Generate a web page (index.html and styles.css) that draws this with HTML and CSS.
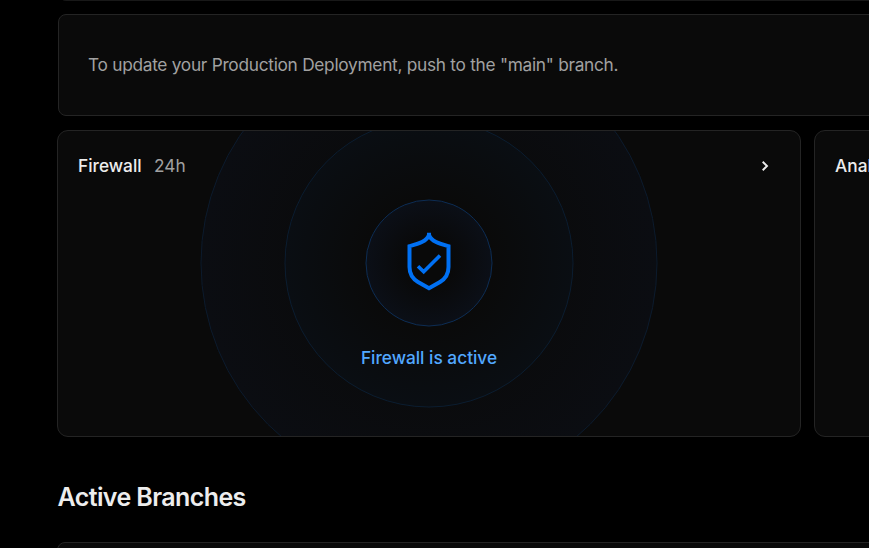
FILE: index.html
```html
<!DOCTYPE html>
<html lang="en">
<head>
<meta charset="utf-8">
<title>Project Overview</title>
<link rel="stylesheet" href="styles.css">
</head>
<body>
<main class="page">
  <section class="panel panel-previous"></section>
  <section class="panel panel-note">
    <p class="note"><span class="note-text">To update your Production Deployment, push to the "main" branch.</span></p>
  </section>
  <div class="cards">
    <article class="card firewall">
      <header class="card-head">
        <h3 class="card-title">Firewall</h3>
        <span class="period">24h</span>
        <svg class="chevron" width="8" height="12" viewBox="0 0 8 12"><path d="M1.7 1.8 6 6 1.7 10.200"/></svg>
      </header>
      <div class="ring ring-large"></div>
      <div class="ring ring-medium"></div>
      <div class="ring ring-small">
        <svg class="shield" width="61" height="61" viewBox="0 0 61 61">
          <path class="shield-body" d="M30.500 0v2.500C28.200 9 20 11.200 11 13.700V34.500C11 41.500 14 46.200 19.500 49.400L30.500 55.800 41.500 49.400C47 46.200 50 41.500 50 34.500V13.700C41 11.200 32.800 9 30.500 2.500"/>
          <path class="shield-check" d="M19.500 33.700 25.200 39.200 41.500 23"/>
        </svg>
      </div>
      <p class="status"><span class="status-text">Firewall is active</span></p>
    </article>
    <article class="card">
      <header class="card-head"><h3 class="card-title">Analytics</h3></header>
    </article>
  </div>
  <h2 class="heading"><span class="heading-text">Active Branches</span></h2>
  <section class="panel panel-branches"></section>
</main>
</body>
</html>
```
FILE: styles.css
```css
* { box-sizing: border-box; }
html, body { margin: 0; height: 100%; overflow: hidden; background: #000; }
body { font-family: Inter, "Liberation Sans", sans-serif; color: #ededed; }
h2, h3, p { margin: 0; }
.page { width: 1600px; height: 548px; overflow: hidden; padding-left: 57px; display: flex; flex-direction: column; }
.panel { flex: none; margin-left: 1px; background: #0a0a0a; border: 1px solid #242424; border-radius: 8px; }
.panel-previous { height: 20px; margin-top: -19px; border-color: #181818; }
.panel-note { height: 102px; margin-top: 13px; padding: 0 29px; display: flex; align-items: center; }
.note { font-size: 17.3px; line-height: 26px; color: #a1a1a1; letter-spacing: -0.28px; white-space: nowrap; }
.cards { flex: none; display: grid; grid-template-columns: 744px 744px; gap: 13px; margin-top: 14px; height: 307px; }
.card { position: relative; overflow: hidden; background: #0a0a0a; border: 1px solid #242424; border-radius: 11px; padding: 0 20px; }
.card-head { display: flex; align-items: center; height: 24px; margin-top: 23px; font-size: 17.3px; position: relative; z-index: 1; }
.card-title { font-size: 17.3px; line-height: 24px; font-weight: 500; letter-spacing: 0; }
.period { margin-left: 12.5px; line-height: 24px; color: #a1a1a1; }
.chevron { margin-left: auto; margin-right: 11px; fill: none; stroke: #ededed; stroke-width: 1.9; }
.ring { position: absolute; left: 371px; top: 132px; transform: translate(-50%, -50%); border-radius: 50%; }
.ring-large { width: 457px; height: 457px; border: 1px solid #0c1b2d; background: radial-gradient(circle closest-side, #0a0a0a 35%, #0b0d12 100%); }
.ring-medium { width: 289px; height: 289px; border: 1px solid #0b1d30; background: radial-gradient(circle closest-side, #0a0a0a 45%, #0a0e13 100%); }
.ring-small { width: 127px; height: 127px; border: 1px solid #0d2d54; background: radial-gradient(circle closest-side, #090909 35%, #0b0f17 100%); display: flex; align-items: center; justify-content: center; }
.shield { fill: none; stroke: #0070f3; }
.shield-body { stroke-width: 4; }
.shield-check { stroke-width: 3.6; }
.status { position: relative; margin-top: 168px; text-align: center; font-size: 17.3px; line-height: 24px; font-weight: 500; color: #52a8ff; letter-spacing: 0; }
.heading { flex: none; margin-top: 42px; padding-left: 0.5px; height: 36px; font-size: 25px; line-height: 36px; font-weight: 600; letter-spacing: -0.6px; }
.panel-branches { margin-top: 27px; margin-left: 0; height: 100px; }
```
